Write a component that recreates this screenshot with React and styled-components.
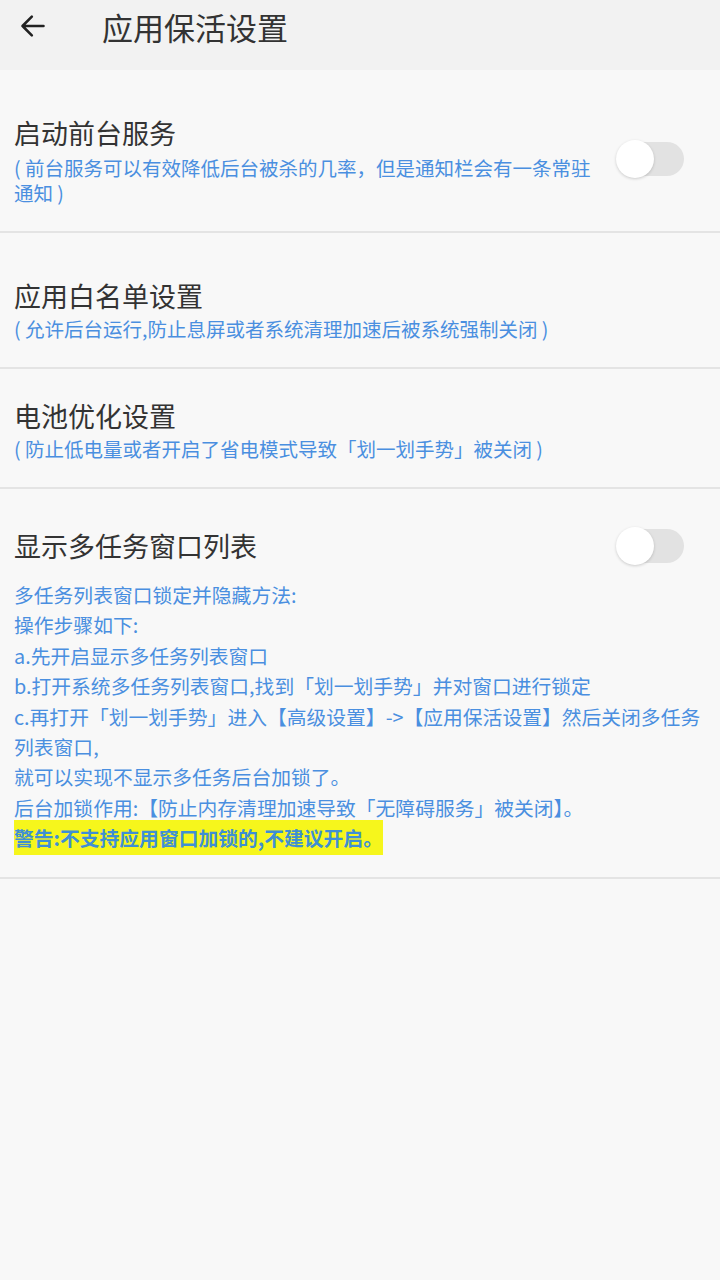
import React, { useState } from 'react'
import styled, { createGlobalStyle } from 'styled-components'

const GlobalStyle = createGlobalStyle`
    html, body {
        margin: 0;
        padding: 0;
        background: #f8f8f8;
        font-family: "Noto Sans CJK SC", "Noto Sans", sans-serif;
    }
`

const Page = styled.div`
    width: 720px;
    min-height: 1280px;
    background: #f8f8f8;
`

const Toolbar = styled.div`
    height: 70px;
    background: #f2f2f2;
    display: flex;
    align-items: center;
    padding-bottom: 18px;
    box-sizing: border-box;
`

const BackButton = styled.div`
    width: 102px;
    display: flex;
    padding-left: 19px;
    box-sizing: border-box;
`

const Title = styled.div`
    font-size: 31px;
    color: #333;
`

const Section = styled.div`
    display: flex;
    align-items: center;
    padding: ${p => p.pt}px 0 26px 14px;
    border-bottom: 2px solid #e4e4e4;
`

const Body = styled.div`
    flex: 1;
`

const Block = styled.div`
    padding: ${p => p.pt}px 0 23px 14px;
    border-bottom: 2px solid #e4e4e4;
`

const HeadRow = styled.div`
    display: flex;
    align-items: center;
    justify-content: space-between;
    margin-bottom: 14px;
`

const ItemTitle = styled.div`
    font-size: 27px;
    line-height: 40px;
    color: #333;
    margin-bottom: ${p => p.gap || 0}px;
`

const Desc = styled.div`
    font-size: 19.5px;
    line-height: 25px;
    color: #4a8fe0;
    width: ${p => p.w || 590}px;
`

const Steps = styled.div`
    font-size: 19.8px;
    line-height: 30.4px;
    color: #4a8fe0;
    width: 694px;
`

const Warn = styled.span`
    background: #f6f61c;
    color: #3f8fd4;
    font-weight: 600;
    padding: 3px 0;
`

const Track = styled.div`
    width: 66px;
    height: 34px;
    border-radius: 17px;
    background: ${p => (p.on ? '#9cc6f2' : '#e2e2e2')};
    margin-right: 36px;
    position: relative;
    flex-shrink: 0;
    cursor: pointer;
`

const Knob = styled.div`
    position: absolute;
    top: -2px;
    left: ${p => (p.on ? '30px' : '-2px')};
    width: 38px;
    height: 38px;
    border-radius: 50%;
    background: #fff;
    box-shadow: 0 1px 3px rgba(0, 0, 0, 0.18);
`

const Switch = () => {
    const [on, setOn] = useState(false)
    return (
        <Track on={on} onClick={() => setOn(!on)}>
            <Knob on={on} />
        </Track>
    )
}

const App = () => {
    return (
        <Page>
            <GlobalStyle />
            <Toolbar>
                <BackButton>
                    <svg width="28" height="28" viewBox="0 0 24 24" fill="none" stroke="#222" strokeWidth="2.2" strokeLinecap="round" strokeLinejoin="round">
                        <path d="M21 12H3M11 4l-8 8 8 8" />
                    </svg>
                </BackButton>
                <Title>应用保活设置</Title>
            </Toolbar>

            <Section pt={43}>
                <Body>
                    <ItemTitle gap={2}>启动前台服务</ItemTitle>
                    <Desc>( 前台服务可以有效降低后台被杀的几率，但是通知栏会有一条常驻通知 )</Desc>
                </Body>
                <Switch />
            </Section>

            <Section pt={43}>
                <Body>
                    <ItemTitle>应用白名单设置</ItemTitle>
                    <Desc w={700}>( 允许后台运行,防止息屏或者系统清理加速后被系统强制关闭 )</Desc>
                </Body>
            </Section>

            <Section pt={27}>
                <Body>
                    <ItemTitle>电池优化设置</ItemTitle>
                    <Desc w={700}>( 防止低电量或者开启了省电模式导致「划一划手势」被关闭 )</Desc>
                </Body>
            </Section>

            <Block pt={37}>
                <HeadRow>
                    <ItemTitle>显示多任务窗口列表</ItemTitle>
                    <Switch />
                </HeadRow>
                <Steps>
                    多任务列表窗口锁定并隐藏方法:<br />
                    操作步骤如下:<br />
                    a.先开启显示多任务列表窗口<br />
                    b.打开系统多任务列表窗口,找到「划一划手势」并对窗口进行锁定<br />
                    c.再打开「划一划手势」进入【高级设置】-&gt;【应用保活设置】然后关闭多任务列表窗口,<br />
                    就可以实现不显示多任务后台加锁了。<br />
                    后台加锁作用:【防止内存清理加速导致「无障碍服务」被关闭】。<br />
                    <Warn>警告:不支持应用窗口加锁的,不建议开启。</Warn>
                </Steps>
            </Block>
        </Page>
    )
}

export default App
